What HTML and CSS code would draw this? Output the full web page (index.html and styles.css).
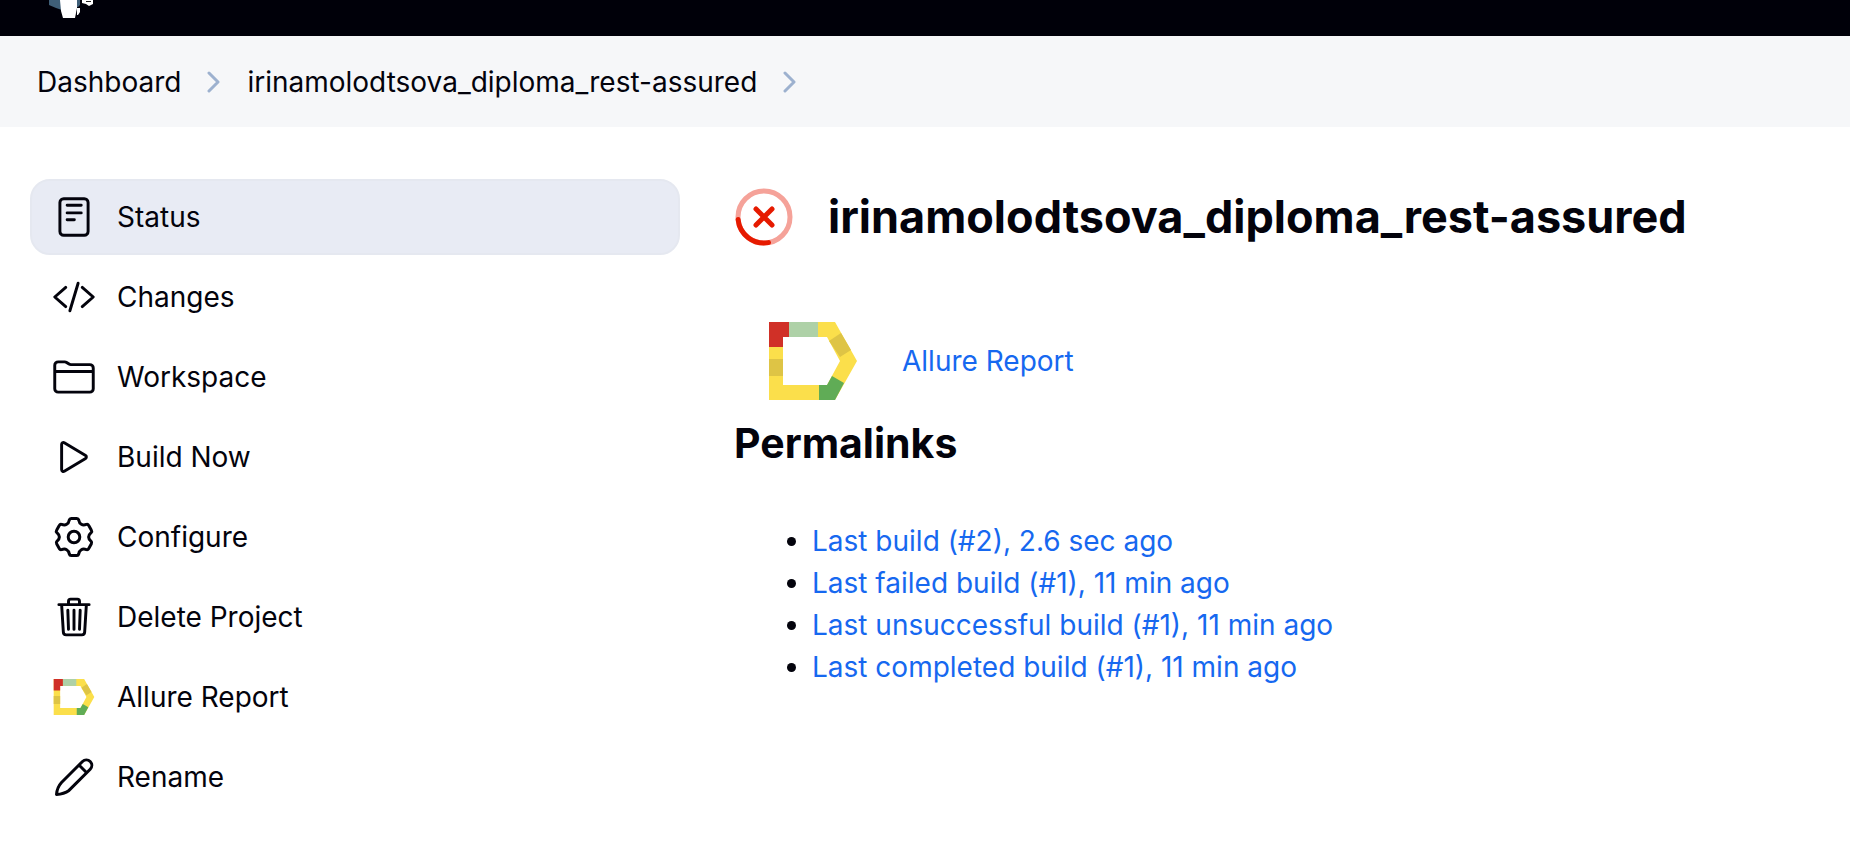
FILE: index.html
```html
<!DOCTYPE html>
<html lang="en">
<head>
<meta charset="utf-8">
<title>irinamolodtsova_diploma_rest-assured</title>
<link rel="stylesheet" href="styles.css">
</head>
<body>
<svg class="defs" aria-hidden="true">
  <symbol id="allure" viewBox="0 0 88 78">
    <path fill="#fbdf4b" d="M0 0h66l22 39-22 39H0zM14 15v48h44l13-24-13-24z" fill-rule="evenodd"/>
    <path fill="#d03027" d="M0 0h20v15h-6v10H0z"/>
    <path fill="#aed1a7" d="M20 0h29v15H20z"/>
    <path fill="#dec445" d="M0 37h14v17H0zM60 19l12-8 10 17-11 7z"/>
    <path fill="#60ac56" d="M50 63h8l5-9 12 7-9 17H50z"/>
  </symbol>
  <symbol id="chevron" viewBox="0 0 14 22">
    <path d="M2 2l9 9-9 9"/>
  </symbol>
</svg>

<header class="header">
  <a class="logo" href="#" aria-label="Jenkins">
    <svg viewBox="0 0 56 20">
      <path fill="#3f5f78" d="M9 0h12l1 10-6-2-7-3z"/>
      <path fill="#3f5f78" d="M37 0h3v5l-2 2h-2z"/>
      <path fill="#fff" d="M20 0h17v8l-2 10H23l-2-7z"/>
      <path fill="#fff" d="M42 0h11v4l-4 2-3-2-4-1zM37 8h3v4l-2 3h-1z"/>
      <path fill="#222" d="M46 1h5v1h-5z"/>
    </svg>
  </a>
</header>

<nav class="breadcrumbs" aria-label="Breadcrumb">
  <a href="#">Dashboard</a>
  <svg class="chevron"><use href="#chevron"/></svg>
  <a href="#">irinamolodtsova_diploma_rest-assured</a>
  <svg class="chevron"><use href="#chevron"/></svg>
</nav>

<div class="page">
  <nav class="tasks" aria-label="Project">
    <a class="task task--active" href="#">
      <svg class="icon" viewBox="0 0 512 512"><rect x="92" y="44" width="328" height="424" rx="44"/><path d="M176 120h164M176 208h164M176 288h84"/></svg>
      <span>Status</span>
    </a>
    <a class="task" href="#">
      <svg class="icon" viewBox="0 0 512 512"><path d="M160 368L32 256l128-112M352 368l128-112-128-112M304 96l-96 320"/></svg>
      <span>Changes</span>
    </a>
    <a class="task" href="#">
      <svg class="icon" viewBox="0 0 512 512"><path d="M440 432H72a40 40 0 01-40-40V120a40 40 0 0140-40h75.890a40 40 0 0122.190 6.720l27.840 18.560a40 40 0 0022.190 6.720H440a40 40 0 0140 40v240a40 40 0 01-40 40zM32 192h448"/></svg>
      <span>Workspace</span>
    </a>
    <a class="task" href="#">
      <svg class="icon" viewBox="0 0 512 512"><path d="M112 111v290c0 17.440 17 28.520 31 20.160l247.900-148.370c12.120-7.250 12.120-26.330 0-33.580L143 90.840c-14-8.360-31 2.720-31 20.160z"/></svg>
      <span>Build Now</span>
    </a>
    <a class="task" href="#">
      <svg class="icon" viewBox="0 0 44 44"><circle cx="22" cy="22" r="5.800"/><path d="M19.200 3.500H24.800Q26.300 3.500 26.700 5Q27.300 8.200 29.300 9.300Q31.300 10.500 34.400 9.400Q35.900 9 36.600 10.300L39.400 15.200Q40.200 16.500 39.100 17.600Q36.600 19.700 36.600 22Q36.600 24.300 39.100 26.400Q40.200 27.500 39.400 28.800L36.600 33.700Q35.900 35 34.400 34.600Q31.300 33.500 29.300 34.700Q27.300 35.800 26.700 39Q26.300 40.500 24.800 40.500H19.200Q17.700 40.500 17.300 39Q16.700 35.800 14.700 34.700Q12.700 33.500 9.600 34.600Q8.100 35 7.400 33.700L4.600 28.800Q3.800 27.500 4.900 26.400Q7.400 24.300 7.400 22Q7.400 19.700 4.900 17.600Q3.800 16.500 4.600 15.200L7.400 10.300Q8.100 9 9.600 9.400Q12.700 10.500 14.700 9.300Q16.700 8.200 17.300 5Q17.700 3.500 19.200 3.500z"/></svg>
      <span>Configure</span>
    </a>
    <a class="task" href="#">
      <svg class="icon" viewBox="0 0 512 512"><path d="M112 112l20 320c.950 18.490 14.400 32 32 32h184c17.670 0 30.870-13.510 32-32l20-320M80 112h352M192 112V72a24 24 0 0124-24h80a24 24 0 0124 24v40M256 176v224M184 176l8 224M328 176l-8 224"/></svg>
      <span>Delete Project</span>
    </a>
    <a class="task" href="#">
      <svg class="icon icon--allure"><use href="#allure"/></svg>
      <span>Allure Report</span>
    </a>
    <a class="task" href="#">
      <svg class="icon" viewBox="0 0 44 44"><path d="M4.500 39.500q.5-7 5-12L30.500 6.500a5.400 5.400 0 017.700 7.700L17 35.400q-5 3.500-12.500 4.100zM27 10l7.700 7.700"/></svg>
      <span>Rename</span>
    </a>
  </nav>

  <main class="main">
    <div class="heading">
      <svg class="status" viewBox="0 0 60 60" role="img" aria-label="Failed">
        <circle class="ring" cx="30" cy="30" r="26"/>
        <path d="M4.100 32.500a26 26 0 0030.400 23.100M22 22l16 16M38 22L22 38"/>
      </svg>
      <h1>irinamolodtsova_diploma_rest-assured</h1>
    </div>
    <div class="report">
      <svg class="report-icon"><use href="#allure"/></svg>
      <a href="#">Allure Report</a>
    </div>
    <h2>Permalinks</h2>
    <ul class="permalinks">
      <li><a href="#">Last build (#2), 2.6 sec ago</a></li>
      <li><a href="#">Last failed build (#1), 11 min ago</a></li>
      <li><a href="#">Last unsuccessful build (#1), 11 min ago</a></li>
      <li><a href="#">Last completed build (#1), 11 min ago</a></li>
    </ul>
  </main>
</div>
</body>
</html>
```
FILE: styles.css
```css
* {
  box-sizing: border-box;
}

body {
  margin: 0;
  background: #fff;
  color: #03030c;
  font-family: Inter, "Liberation Sans", sans-serif;
  font-size: 28px;
  line-height: 42px;
}

a {
  color: inherit;
  text-decoration: none;
}

svg {
  flex: none;
}

.defs {
  display: none;
}

.header {
  height: 36px;
  padding-left: 40px;
  background: #000009;
}

.logo,
.logo svg {
  display: block;
  width: 56px;
  height: 20px;
}

.breadcrumbs {
  display: flex;
  align-items: center;
  gap: 26px;
  height: 91px;
  padding: 0 37px;
  background: #f6f7f9;
}

.chevron {
  width: 14px;
  height: 22px;
  fill: none;
  stroke: #9db1cf;
  stroke-width: 3;
  stroke-linecap: round;
  stroke-linejoin: round;
}

.page {
  display: grid;
  grid-template-columns: 650px 1fr;
  gap: 54px;
  padding: 52px 30px 40px;
}

.tasks {
  display: flex;
  flex-direction: column;
  gap: 4px;
}

.task {
  display: flex;
  align-items: center;
  gap: 21px;
  height: 76px;
  padding: 0 22px;
  border-radius: 20px;
}

.task--active {
  border: 2px solid #e5e8f0;
  padding: 0 20px;
  background: #e8ebf4;
}

.icon {
  width: 44px;
  height: 44px;
  fill: none;
  stroke: currentColor;
  stroke-width: 34;
  stroke-linecap: round;
  stroke-linejoin: round;
}

.icon[viewBox="0 0 44 44"] {
  stroke-width: 3;
}

.icon--allure {
  height: 36px;
  stroke: none;
}

.heading {
  display: flex;
  align-items: center;
  gap: 34px;
  height: 76px;
}

.status {
  width: 60px;
  height: 60px;
  fill: none;
  stroke: #e61a00;
  stroke-width: 5;
  stroke-linecap: round;
}

.status .ring {
  stroke: #f5a299;
}

h1,
h2 {
  margin: 0;
  font-weight: 700;
}

h1 {
  font-size: 45px;
  line-height: 60px;
}

h2 {
  font-size: 41px;
  line-height: 60px;
}

.report {
  display: flex;
  align-items: center;
  gap: 45px;
  padding: 67px 0 13px 35px;
  color: #1668f0;
}

.report-icon {
  width: 88px;
  height: 78px;
}

.permalinks {
  margin: 47px 0 0;
  padding-left: 78px;
}

.permalinks a {
  color: #1668f0;
}
```
